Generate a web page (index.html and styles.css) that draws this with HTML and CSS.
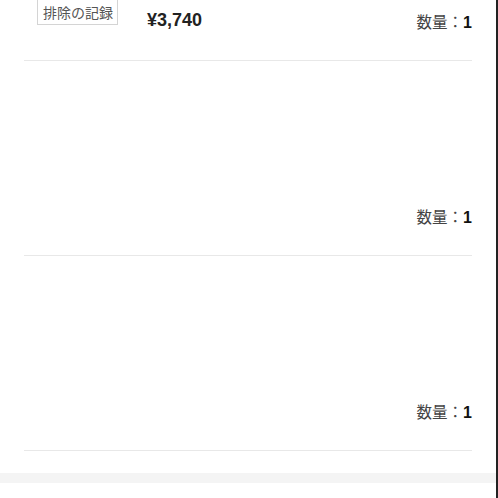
FILE: index.html
```html
<!DOCTYPE html>
<html lang="ja">
<head>
    <meta charset="UTF-8">
    <meta name="viewport" content="width=device-width, initial-scale=1.0">
    <title>カート</title>
    <link rel="stylesheet" href="styles.css">
</head>
<body>
    <div class="page">
        <ul class="cart">
            <li class="item">
                <div class="foot">
                    <span class="tag">排除の記録</span>
                    <span class="price">¥3,740</span>
                    <span class="qty">数量：<b>1</b></span>
                </div>
            </li>
            <li class="item">
                <div class="foot">
                    <span class="qty">数量：<b>1</b></span>
                </div>
            </li>
            <li class="item">
                <div class="foot">
                    <span class="qty">数量：<b>1</b></span>
                </div>
            </li>
        </ul>
        <div class="band"></div>
    </div>
</body>
</html>
```

FILE: styles.css
```css
*{
    margin: 0;
    padding: 0;
    box-sizing: border-box;
}
body
{
    background-color: #ffffff;
    font-family: "Liberation Sans", "Noto Sans CJK JP", sans-serif;
    color: #333333;
}
.page
{
    width: 498px;
    height: 498px;
    overflow: hidden;
    border-right: 2px solid #222222;
}
.cart
{
    list-style: none;
    padding: 0 24px;
    margin-top: -134px;
}
.item
{
    height: 195px;
    border-bottom: 1px solid #e8e8e8;
    display: flex;
    flex-direction: column;
    justify-content: flex-end;
}
.foot
{
    height: 32px;
    margin-bottom: 28px;
    display: flex;
    align-items: flex-start;
}
.tag
{
    margin-left: 13px;
    margin-top: -1px;
    height: 26px;
    padding: 0 4px 0 5px;
    border: 1px solid #d4d4d4;
    font-family: "Noto Sans CJK JP", sans-serif;
    font-size: 14px;
    line-height: 24px;
    color: #555555;
}
.price
{
    margin-left: 29px;
    margin-top: 10px;
    font-size: 18px;
    line-height: 21px;
    font-weight: bold;
    color: #222222;
}
.qty
{
    margin-left: auto;
    margin-top: 11px;
    font-family: "Noto Sans CJK JP", sans-serif;
    font-size: 15.5px;
    line-height: 20px;
    color: #444444;
}
.qty b
{
    font-family: "Liberation Sans", sans-serif;
    font-size: 16px;
    color: #111111;
}
.band
{
    margin-top: 22px;
    height: 10px;
    background-color: #f4f4f4;
}
```
